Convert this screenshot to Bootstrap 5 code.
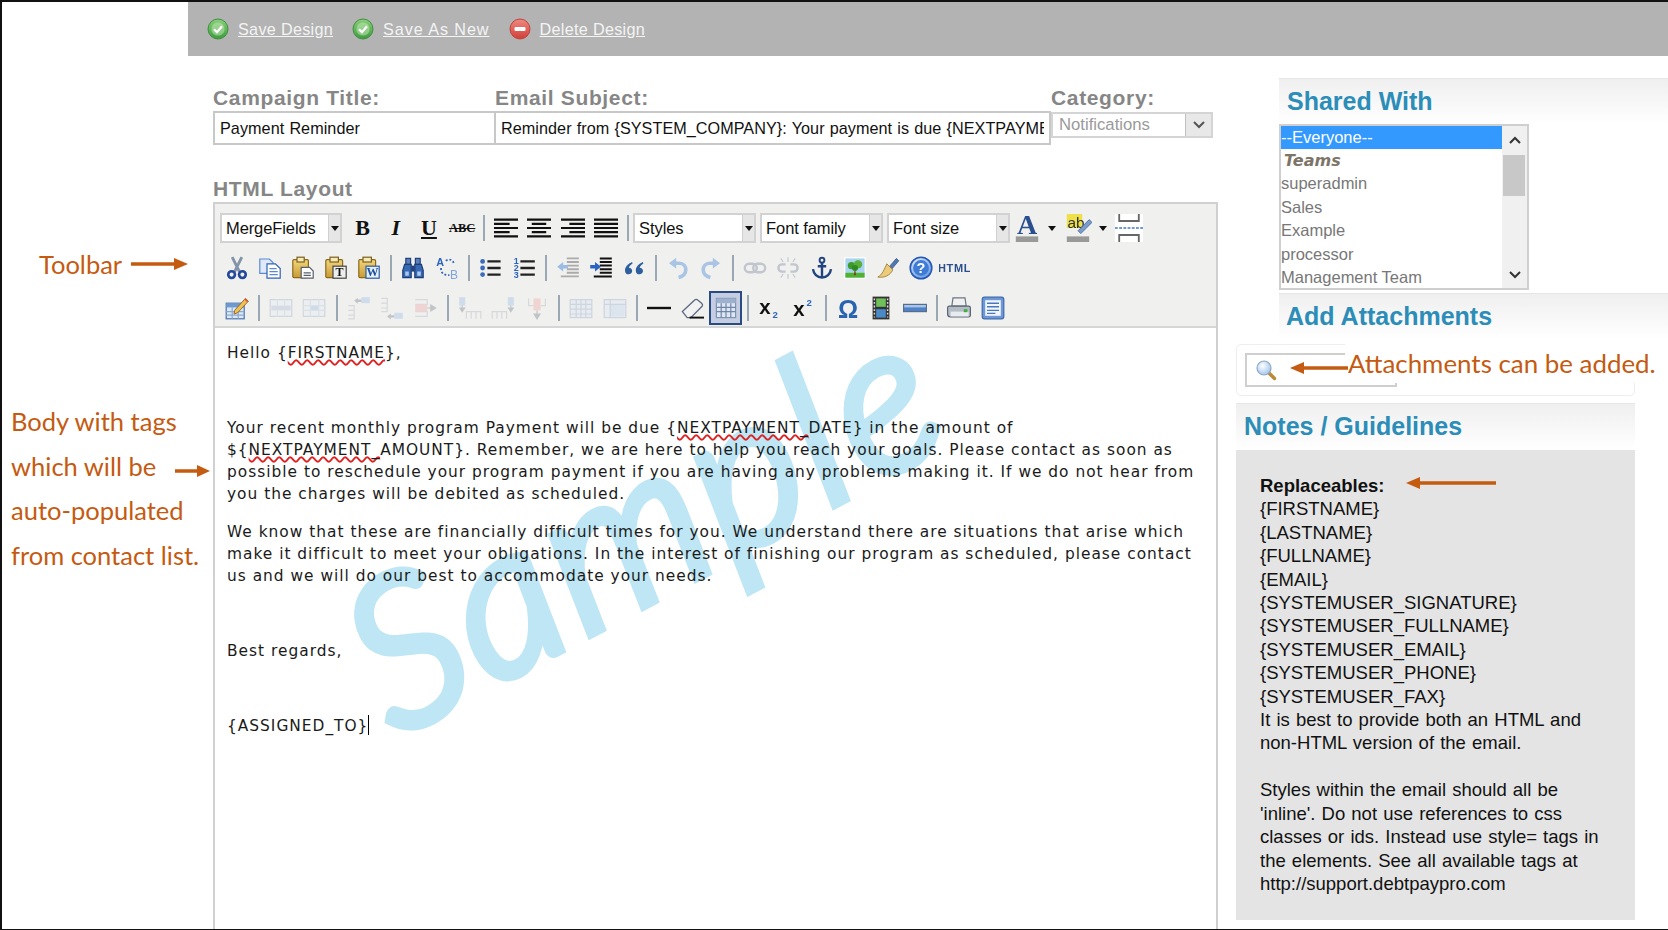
<!DOCTYPE html>
<html lang="en">
<head>
<meta charset="UTF-8">
<title>Campaign Design</title>
<link href="https://cdn.jsdelivr.net/npm/bootstrap@5.3.0/dist/css/bootstrap.min.css" rel="stylesheet">
<style>
html, body { margin: 0; background: #fff; }
body { font-family: "Liberation Sans", Arial, sans-serif; overflow: hidden; }
.page-frame { width: 1668px; height: 930px; border-top: 2px solid #111; border-left: 2px solid #111; border-bottom: 1px solid #111; overflow: hidden; position: relative; }
.action-bar { margin-left: 186px; height: 54px; background: #b3b3b3; padding-left: 19px; font-size: 16.2px; gap: 8px; }
.action-bar a { color: #f4f4f4; margin-right: 11px; margin-left: 1px; letter-spacing: .3px; }
.action-bar a.link-wide { letter-spacing: .92px; }
.note-col { width: 211px; flex: none; position: relative; font-family: Lato, sans-serif; color: #c55a11; font-size: 25.5px; }
.note-tool { margin-top: 193px; height: 30px; padding-left: 37px; }
.note-body { padding: 120px 0 0 9px; line-height: 44.7px; white-space: nowrap; }
.note-arrow { display: block; }
.note-body-line { position: relative; }
.note-body-line svg { position: absolute; left: 163px; top: 20px; }
.main-col { width: 1005px; flex: none; }
.field-row { padding-top: 29px; }
.field-label { color: #868686; font-weight: 700; font-size: 21px; line-height: 26px; letter-spacing: .65px; }
.field-title { width: 282px; flex: none; }
.field-subject { width: 556px; flex: none; }
.field-input { display: block; width: 100%; height: 34px; border: 2px solid #c8c8c8; border-radius: 0; padding: 0 5px; font-size: 16.2px; letter-spacing: .05px; word-spacing: .6px; color: #111; font-family: "Liberation Sans", sans-serif; background: #fff; outline: 0; }
.field-title .field-input { border-right-width: 1px; }
.field-subject .field-input { border-left-width: 1px; }
.cat-select { width: 162px; height: 26px; margin-top: 1px; border: 2px solid #d4d4d4; color: #9a9a9a; font-size: 16.7px; padding-left: 6px; background: #fff; }
.cat-arrow { width: 26px; height: 22px; margin-left: auto; background: #e8e8e8; border-left: 1px solid #c0c0c0; }
.editor-label { color: #868686; font-weight: 700; font-size: 21px; line-height: 26px; letter-spacing: .65px; margin-top: 31px; }
.editor-box { border: 2px solid #d0d0d0; border-bottom: 0; height: 740px; width: 1005px; }
.editor-tools { background: #f0f0ee; height: 124px; padding: 4px 0 0 5px; border-bottom: 2px solid #d6d6d6; }
.tool-row { height: 40px; }
.tool-btn { width: 33.2px; height: 34px; flex: none; }
.tool-btn svg { width: 24px; height: 24px; display: block; flex: none; filter: blur(.3px); }
.tool-btn .tool-big { width: 28px; height: 28px; }
.tool-btn .tool-html { width: 31px; height: 20px; }
.tool-off svg { opacity: .45; }
.tool-on { background: #c4cde2; outline: 2px solid #2a4a82; outline-offset: -2px; }
.tool-sep { width: 10.8px; height: 26px; flex: none; background: linear-gradient(#9aa7b5, #9aa7b5) center / 2px 100% no-repeat; }
.tool-wide .tool-btn { width: 33.4px; }
.tool-wide .tool-sep { width: 11px; }
.tool-mini { width: 18px; }
.drop-box { height: 30px; flex: none; border: 2px solid #d2d2d2; background: #fff; padding-left: 4px; font-size: 16.5px; letter-spacing: -.1px; color: #111; }
.drop-caret { width: 12px; height: 26px; margin-left: auto; background: #e6e6e6; border-left: 1px solid #d0d0d0; }
.tri { width: 0; height: 0; border-left: 4px solid transparent; border-right: 4px solid transparent; border-top: 5px solid #111; }
.tb-letter { font-family: "Liberation Serif", serif; font-size: 22px; font-weight: 700; color: #111; line-height: 1; }
.editor-body { position: relative; padding: 14px 0 0 12px; font-family: "DejaVu Sans", Verdana, sans-serif; font-size: 15.4px; letter-spacing: 1px; line-height: 22px; color: #1a1a1a; overflow: hidden; height: 614px; }
.editor-body p { margin: 0 0 15.5px; position: relative; }
.spell-err { text-decoration: underline wavy #d22; text-decoration-thickness: 1.5px; }
.caret-bar { display: inline-block; width: 1px; height: 20px; background: #000; vertical-align: -4px; }
.water-mark { position: absolute; left: 192px; top: 225px; font-family: Lato, sans-serif; font-style: italic; font-weight: 300; font-size: 205px; letter-spacing: 5px; line-height: 1; color: #bee6f4; -webkit-text-stroke: 11px #bee6f4; paint-order: stroke; transform: rotate(-28deg); transform-origin: left bottom; white-space: nowrap; user-select: none; }
.side-col { flex: 1; min-width: 0; position: relative; margin-left: 18px; }
.soft-head { background: linear-gradient(#efefef, #fff); border-top: 1px solid #e6e6e6; color: #2b8db8; font-weight: 700; font-size: 25px; line-height: 30px; letter-spacing: 0; }
.share-head { margin: 22px 0 0 43px; height: 46px; padding: 7px 0 0 8px; }
.share-list { margin-left: 43px; width: 250px; height: 166px; border: 2px solid #cfcfcf; background: #fff; overflow: hidden; }
.share-items { flex: 1; font-size: 16.5px; color: #777; line-height: 23.4px; }
.share-pick { background: #3399ff; color: #fff; height: 23px; line-height: 23px; }
.share-team { font-family: "DejaVu Sans", sans-serif; font-weight: 700; font-style: italic; font-size: 16px; color: #7d7468; padding-left: 3px; }
.share-bar { width: 25px; background: #f0f0f0; }
.share-thumb { height: 41px; width: 22px; background: #c8c8c8; margin: 2px 0 0 1px; }
.chev { height: 27px; color: #333; }
.chev-down { margin-top: auto; }
.attach-head { margin: 3px 0 0 43px; height: 46px; padding: 7px 0 0 7px; }
.attach-box { margin: 5px 33px 0 0; height: 52px; border: 1px solid #eee; border-radius: 5px; padding: 8px 0 0 8px; position: relative; }
.attach-input { width: 152px; height: 34px; border: 2px solid #cfcfcf; padding-left: 8px; }
.attach-note { position: absolute; left: 108px; top: -2px; height: 40px; padding-left: 3px; background: #fff; font-family: Lato, sans-serif; color: #c55a11; font-size: 25.9px; white-space: nowrap; }
.attach-arrow { position: absolute; left: 53px; top: 16px; z-index: 2; }
.guide-head { margin: 7px 33px 0 0; height: 47px; padding: 7px 0 0 8px; }
.guide-box { margin-right: 33px; height: 470px; background: #e4e4e4; padding: 24px 10px 0 24px; font-size: 18.5px; line-height: 23.4px; word-spacing: 1px; color: #111; position: relative; }
.guide-arrow { position: absolute; left: 170px; top: 26px; }
</style>
</head>
<body>

<svg width="0" height="0" class="position-absolute">
  <defs>
    <linearGradient id="gGreen" x1="0" y1="0" x2="0" y2="1"><stop offset="0" stop-color="#8ad07a"/><stop offset="1" stop-color="#3d9c3d"/></linearGradient>
    <linearGradient id="gRed" x1="0" y1="0" x2="0" y2="1"><stop offset="0" stop-color="#f08a80"/><stop offset="1" stop-color="#cf3f38"/></linearGradient>
    <linearGradient id="gClip" x1="0" y1="0" x2="0" y2="1"><stop offset="0" stop-color="#f3d77c"/><stop offset="1" stop-color="#c99a35"/></linearGradient>
    <radialGradient id="gHelp" cx=".4" cy=".35" r=".7"><stop offset="0" stop-color="#fff"/><stop offset="1" stop-color="#5f94e0"/></radialGradient>
    <radialGradient id="gLens" cx=".4" cy=".35" r=".7"><stop offset="0" stop-color="#fff"/><stop offset="1" stop-color="#9cc4ec"/></radialGradient>
  </defs>
  <symbol id="i-ok" viewBox="0 0 22 22"><circle cx="11" cy="11" r="10" fill="url(#gGreen)" stroke="#3f8f3f"/><circle cx="11" cy="11" r="6.6" fill="#bfe5b5" opacity=".55"/><path d="M7 11.2l3 3 5-6" fill="none" stroke="#fff" stroke-width="2.2"/></symbol>
  <symbol id="i-del" viewBox="0 0 22 22"><circle cx="11" cy="11" r="10" fill="url(#gRed)" stroke="#c0443c"/><rect x="5.500" y="9" width="11" height="4" rx="1" fill="#fff"/></symbol>
  <symbol id="i-cut" viewBox="0 0 20 20"><path d="M6 1l6 12M14 1L8 13" stroke="#8494a8" stroke-width="2.400" fill="none"/><circle cx="5.500" cy="15.500" r="2.800" fill="none" stroke="#24489a" stroke-width="2.200"/><circle cx="14.500" cy="15.500" r="2.800" fill="none" stroke="#24489a" stroke-width="2.200"/></symbol>
  <symbol id="i-copy" viewBox="0 0 20 20"><path d="M1.500 2.500h8l3 3v9h-11z" fill="#dfe9fa" stroke="#5c8ad0"/><path d="M7.500 6.500h7l4 4v8h-11z" fill="#fff" stroke="#2e62b5"/><path d="M9.500 10.500h6M9.500 13h7M9.500 15.500h7" stroke="#5c8ad0"/></symbol>
  <symbol id="i-paste" viewBox="0 0 20 20"><rect x="1.500" y="3" width="13" height="15" rx="1" fill="url(#gClip)" stroke="#8a6a1a"/><rect x="5" y="1" width="6" height="4" fill="#f6e9b4" stroke="#7a6020"/><path d="M8.500 9.500h7l3 3v6h-10z" fill="#fff" stroke="#56606e"/><path d="M10.500 14h6M10.500 16.200h6" stroke="#56606e"/></symbol>
  <symbol id="i-ptext" viewBox="0 0 20 20"><rect x="1.500" y="3" width="14" height="15" rx="1" fill="url(#gClip)" stroke="#8a6a1a"/><rect x="5" y="1" width="7" height="4" fill="#f6e9b4" stroke="#7a6020"/><rect x="7.500" y="8.500" width="11" height="10" fill="#eee" stroke="#444"/><text x="13" y="17" text-anchor="middle" font-family="Liberation Serif, serif" font-weight="700" font-size="10" fill="#111">T</text></symbol>
  <symbol id="i-pword" viewBox="0 0 20 20"><rect x="1.500" y="3" width="14" height="15" rx="1" fill="url(#gClip)" stroke="#8a6a1a"/><rect x="5" y="1" width="7" height="4" fill="#f6e9b4" stroke="#7a6020"/><rect x="7.500" y="8.500" width="11" height="10" fill="#e6effc" stroke="#2a5ca8"/><text x="13" y="17" text-anchor="middle" font-family="Liberation Serif, serif" font-weight="700" font-size="10" fill="#1c4f9e">W</text></symbol>
  <symbol id="i-find" viewBox="0 0 20 20"><path d="M4 2h4v5H4zM12 2h4v5h-4z" fill="#5c7fb8" stroke="#23437e"/><path d="M3 7h5.500v11H1.500v-6zM11.500 7H17l1.500 5v6h-7z" fill="#3768b4" stroke="#1e3c74"/><rect x="8.500" y="8" width="3" height="5" fill="#23437e"/><path d="M3.500 13h3v3.500h-3zM13.500 13h3v3.500h-3z" fill="#a9c8ee"/></symbol>
  <symbol id="i-repl" viewBox="0 0 20 20"><text x="1" y="8" font-family="Liberation Sans, sans-serif" font-size="9" fill="#2a64c0" font-weight="700">A</text><text x="12.500" y="19" font-family="Liberation Sans, sans-serif" font-size="10" fill="#7fa6dc">B</text><path d="M5 10c0 4 2 6 7 6M9 4c3-2 6-1 7 3" fill="none" stroke="#2a64c0" stroke-width="1.500" stroke-dasharray="1.600 1.600"/></symbol>
  <symbol id="i-bul" viewBox="0 0 20 20"><path d="M7 4.500h11M7 10h11M7 15.500h11" stroke="#222" stroke-width="2"/><circle cx="3" cy="4.500" r="2" fill="#3c6cb8"/><circle cx="3" cy="10" r="2" fill="#3c6cb8"/><circle cx="3" cy="15.500" r="2" fill="#3c6cb8"/></symbol>
  <symbol id="i-num" viewBox="0 0 20 20"><path d="M7 4.500h12M7 10h12M7 15.500h12" stroke="#222" stroke-width="2"/><g font-family="Liberation Sans, sans-serif" font-weight="700" font-size="7.500" fill="#2a64c0"><text x="1.500" y="6.500">1</text><text x="1.500" y="12.500">2</text><text x="1.500" y="18.500">3</text></g></symbol>
  <symbol id="i-out" viewBox="0 0 20 20"><path d="M9 2h10M9 5h10M9 8h10M9 11h10M9 14h10M4 17h15" stroke="#aaa" stroke-width="1.600"/><path d="M1 9l5-4v2.500h4v3H6V13z" fill="#9bbce4"/></symbol>
  <symbol id="i-ind" viewBox="0 0 20 20"><path d="M9 2h10M9 5h10M9 8h10M9 11h10M9 14h10M4 17h15" stroke="#111" stroke-width="1.700"/><path d="M10 9L5 5v2.500H1v3h4V13z" fill="#2a64c0"/></symbol>
  <symbol id="i-quote" viewBox="0 0 20 20"><path d="M8.500 5C5 6.500 2.500 9 2.500 12c0 2 1.300 3.300 3 3.300s3-1.300 3-2.800-1.200-2.700-2.800-2.700c.5-1.200 1.500-2.500 3-3.300zM17.500 5C14 6.500 11.500 9 11.500 12c0 2 1.300 3.300 3 3.300s3-1.300 3-2.800-1.200-2.700-2.800-2.700c.5-1.200 1.500-2.500 3-3.300z" fill="#2d5e9e"/></symbol>
  <symbol id="i-undo" viewBox="0 0 20 20"><path d="M7 6h4c3.500 0 5.500 2.500 5.500 5.500S14 17 10.500 18" fill="none" stroke="#a9c4e4" stroke-width="3"/><path d="M2.500 6l6-4.500v9z" fill="#a9c4e4"/></symbol>
  <symbol id="i-redo" viewBox="0 0 20 20"><path d="M13 6H9C5.500 6 3.500 8.500 3.500 11.500S6 17 9.500 18" fill="none" stroke="#a9c4e4" stroke-width="3"/><path d="M17.500 6l-6-4.500v9z" fill="#a9c4e4"/></symbol>
  <symbol id="i-link" viewBox="0 0 20 20"><rect x="1.500" y="6.500" width="10" height="7" rx="3.500" fill="none" stroke="#c0c5ce" stroke-width="2"/><rect x="8.500" y="6.500" width="10" height="7" rx="3.500" fill="none" stroke="#c0c5ce" stroke-width="2"/></symbol>
  <symbol id="i-unlink" viewBox="0 0 20 20"><path d="M8 7H5a3 3 0 0 0 0 6h3M12 7h3a3 3 0 0 1 0 6h-3" fill="none" stroke="#c0c5ce" stroke-width="2"/><path d="M10 1v4M10 15v4M4 2l2 3M16 2l-2 3M4 18l2-3M16 18l-2-3" stroke="#c4c8d0"/></symbol>
  <symbol id="i-anchor" viewBox="0 0 20 20"><circle cx="10" cy="3.500" r="2" fill="none" stroke="#23437e" stroke-width="1.600"/><path d="M10 5.500V18M6.500 8.500h7M2.500 11c.5 4 3.500 7 7.500 7s7-3 7.500-7" fill="none" stroke="#23437e" stroke-width="2"/></symbol>
  <symbol id="i-img" viewBox="0 0 20 20"><rect x="1" y="1" width="18" height="18" fill="#fff"/><rect x="2" y="2" width="16" height="16" fill="#a9d3f0"/><rect x="2" y="14" width="16" height="4" fill="#4fb32c"/><path d="M9 16l1-6 1 6z" fill="#7a4a1c"/><circle cx="7" cy="8" r="3" fill="#3d9a2c"/><circle cx="12.500" cy="7" r="3.500" fill="#56b03a"/><circle cx="10" cy="10" r="2.500" fill="#2f8a24"/></symbol>
  <symbol id="i-broom" viewBox="0 0 20 20"><path d="M11 9l6-7 2 2-6 7z" fill="#5478b0" stroke="#2d4a7e" stroke-width=".6"/><path d="M9 6.500l5 5C12 16 7 18.500 1.500 17.500 5 16 7 11 9 6.500z" fill="#eccb7c" stroke="#9a7b30" stroke-width=".7"/></symbol>
  <symbol id="i-help" viewBox="0 0 20 20"><circle cx="10" cy="10" r="9" fill="url(#gHelp)" stroke="#2458b4" stroke-width="1.300"/><circle cx="10" cy="10" r="6.600" fill="#3f7cd6"/><text x="10" y="14.500" text-anchor="middle" font-family="Liberation Sans, sans-serif" font-weight="700" font-size="12" fill="#fff">?</text></symbol>
  <symbol id="i-tedit" viewBox="0 0 20 20"><rect x="1" y="6" width="15" height="13" fill="#dde8f6" stroke="#4a74ae"/><rect x="1" y="6" width="15" height="3.500" fill="#6f9ad0"/><path d="M1 13h15M1 16h15M6 9v10M11 9v10" stroke="#8aaad2"/><path d="M8 12l9-10 2.500 2.300L10.500 14l-3 1z" fill="#f0c050" stroke="#8a5a20" stroke-width=".7"/><path d="M16 3l1-1 2.500 2.300-1 1z" fill="#d85a3a"/></symbol>
  <symbol id="i-tr" viewBox="0 0 20 20"><rect x="1" y="3" width="18" height="14" fill="#e8eef6" stroke="#aab8cc"/><rect x="2" y="8" width="16" height="4" fill="#b8c4d6"/><path d="M7 3v5M13 3v5M7 12v5M13 12v5" stroke="#c4cfdd"/></symbol>
  <symbol id="i-td" viewBox="0 0 20 20"><rect x="1" y="3" width="18" height="14" fill="#e8eef6" stroke="#aab8cc"/><rect x="7" y="8" width="7" height="4" fill="#9fc0ea"/><path d="M7 3v14M14 3v14M1 8h18M1 12h18" stroke="#c4cfdd"/></symbol>
  <symbol id="i-rbef" viewBox="0 0 20 20"><path d="M1 8h5v4H1M1 12h5v4H1M1 16h5v3H1" fill="none" stroke="#b9bcc2"/><rect x="12" y="1" width="7" height="5" fill="#a9c6e8"/><path d="M6 4l3-2.500V3h3v2H9v1.500z" fill="#8a9097"/></symbol>
  <symbol id="i-raft" viewBox="0 0 20 20"><path d="M1 2h5v4H1M1 6h5v4H1M1 10h5v3H1" fill="none" stroke="#b9bcc2"/><rect x="12" y="14" width="7" height="5" fill="#a9c6e8"/><path d="M6 17l3-2.500V16h3v2H9v1.500z" fill="#8a9097"/></symbol>
  <symbol id="i-rdel" viewBox="0 0 20 20"><path d="M1 3h10v4H1M1 13h10v4H1" fill="none" stroke="#b9bcc2"/><rect x="1" y="7" width="10" height="6" fill="#f0b4b4"/><path d="M11 10h5M14 7.500l4 2.500-4 2.500z" fill="#8a9097" stroke="#8a9097"/></symbol>
  <symbol id="i-cbef" viewBox="0 0 20 20"><rect x="1" y="1" width="5" height="7" fill="#a9c6e8"/><path d="M3.500 8v3M1.500 10l2 3 2-3z" fill="#8a9097" stroke="#8a9097"/><path d="M7 19v-6h4v6M11 19v-6h4v6M15 19v-6h4v6" fill="none" stroke="#b9bcc2"/></symbol>
  <symbol id="i-caft" viewBox="0 0 20 20"><rect x="14" y="1" width="5" height="7" fill="#a9c6e8"/><path d="M16.500 8v3M14.500 10l2 3 2-3z" fill="#8a9097" stroke="#8a9097"/><path d="M1 19v-6h4v6M5 19v-6h4v6M9 19v-6h4v6" fill="none" stroke="#b9bcc2"/></symbol>
  <symbol id="i-cdel" viewBox="0 0 20 20"><path d="M3 2v6h4M17 2v6h-4" fill="none" stroke="#b9bcc2"/><rect x="7" y="2" width="6" height="10" fill="#f0b4b4"/><path d="M10 12v4M7.500 15l2.500 4 2.500-4z" fill="#8a9097" stroke="#8a9097"/></symbol>
  <symbol id="i-tbl" viewBox="0 0 20 20"><rect x="1" y="3" width="18" height="15" fill="#dfe8f4" stroke="#a3b5cc"/><path d="M1 7h18M1 11h18M1 15h18M6 3v15M10 3v15M14 3v15" stroke="#a3b5cc"/></symbol>
  <symbol id="i-tbl2" viewBox="0 0 20 20"><rect x="1" y="3" width="18" height="15" fill="#e0e9f6" stroke="#a3b5cc"/><rect x="6" y="7" width="12" height="10" fill="#c6d8f0"/><path d="M1 7h18M6 3v15" stroke="#a3b5cc"/></symbol>
  <symbol id="i-hr" viewBox="0 0 20 20"><path d="M0 10h20" stroke="#111" stroke-width="2"/></symbol>
  <symbol id="i-erase" viewBox="0 0 20 20"><path d="M2 13L12 3.500c1-1 2-1 3 0l3 2.500c1 1 1 2 0 3L9 18H6z" fill="#f2f2f2" stroke="#5a6a80" stroke-width="1.100"/><path d="M8 18h12" stroke="#111" stroke-width="1.600"/></symbol>
  <symbol id="i-cal" viewBox="0 0 20 20"><rect x="2" y="2" width="16" height="16" fill="#dfe6f2" stroke="#7f94b4"/><rect x="2" y="2" width="16" height="4" fill="#9db0cc"/><path d="M2 9.500h16M2 13h16M6 6v12M10 6v12M14 6v12" stroke="#6f86a8"/></symbol>
  <symbol id="i-film" viewBox="0 0 20 20"><rect x="3" y="0.500" width="14" height="19" fill="#333"/><rect x="6" y="2" width="8" height="7" fill="#6fc05a"/><rect x="6" y="11" width="8" height="7" fill="#4a8ac8"/><path d="M4.500 2v16M15.500 2v16" stroke="#ddd" stroke-width="1.200" stroke-dasharray="1.500 1.500"/></symbol>
  <symbol id="i-bar" viewBox="0 0 20 20"><rect x="0.500" y="7" width="19" height="6" fill="#4f82c8" stroke="#5a6d88"/><rect x="1" y="7.500" width="18" height="2" fill="#a8c6ec"/></symbol>
  <symbol id="i-print" viewBox="0 0 20 20"><path d="M5 1.500h10l1 7H4z" fill="#f0f0f0" stroke="#6a7684"/><path d="M2 8.500h16c1 0 1.500.5 1.500 1.500v6c0 1-.5 1.500-1.500 1.500H3c-1.500 0-2.500-1-2.500-2.500V10c0-1 .5-1.500 1.500-1.500z" fill="#b4bcc6" stroke="#596572"/><rect x="3" y="13" width="15" height="4" fill="#e8ecf0"/><rect x="14" y="11" width="3" height="2.500" fill="#3fb03a"/></symbol>
  <symbol id="i-prev" viewBox="0 0 20 20"><rect x="1" y="1" width="18" height="18" rx="2" fill="#6d98d8" stroke="#3d68ac"/><rect x="3.500" y="3.500" width="13" height="13" fill="#f2f6fc"/><path d="M5 6h10M5 9h10M5 12h10M5 14.500h7" stroke="#4a78bc" stroke-width="1.200"/></symbol>
  <symbol id="i-lens" viewBox="0 0 22 22"><path d="M13 13l6.500 6.500" stroke="#b98a3c" stroke-width="3.400" stroke-linecap="round"/><circle cx="9" cy="9" r="7" fill="url(#gLens)" stroke="#8fa9c4" stroke-width="1.200"/></symbol>
</svg>

<div class="page-frame">
  <div class="action-bar d-flex align-items-center">
    <svg width="22" height="22"><use href="#i-ok"/></svg><a href="#">Save Design</a>
    <svg width="22" height="22"><use href="#i-ok"/></svg><a href="#" class="link-wide">Save As New</a>
    <svg width="22" height="22"><use href="#i-del"/></svg><a href="#">Delete Design</a>
  </div>

  <div class="d-flex">
    <div class="note-col">
      <div class="note-tool d-flex align-items-center gap-2 text-nowrap">Toolbar
        <svg class="note-arrow" width="58" height="14" viewBox="0 0 58 14"><path d="M1 7h44" stroke="#c55a11" stroke-width="3.500"/><path d="M44 1l14 6-14 6z" fill="#c55a11"/></svg>
      </div>
      <div class="note-body">
        <div>Body with tags</div>
        <div class="note-body-line">which will be <svg width="36" height="14" viewBox="0 0 36 14"><path d="M1 7h22" stroke="#c55a11" stroke-width="3.500"/><path d="M23 1l13 6-13 6z" fill="#c55a11"/></svg></div>
        <div>auto-populated</div>
        <div>from contact list.</div>
      </div>
    </div>

    <div class="main-col">
      <div class="field-row d-flex">
        <div class="field-title"><div class="field-label">Campaign Title:</div><input class="field-input" value="Payment Reminder"></div>
        <div class="field-subject"><div class="field-label">Email Subject:</div><input class="field-input" value="Reminder from {SYSTEM_COMPANY}: Your payment is due {NEXTPAYMENT_DATE}"></div>
        <div><div class="field-label">Category:</div>
          <div class="cat-select d-flex align-items-center">Notifications
            <div class="cat-arrow d-flex align-items-center justify-content-center"><svg width="14" height="10" viewBox="0 0 14 10"><path d="M2 2l5 5 5-5" fill="none" stroke="#555" stroke-width="2"/></svg></div>
          </div>
        </div>
      </div>

      <div class="editor-label">HTML Layout</div>
      <div class="editor-box">
        <div class="editor-tools">
          <div class="tool-row d-flex align-items-center">
            <div class="drop-box d-flex align-items-center" style="width:122px">MergeFields<span class="drop-caret d-flex align-items-center justify-content-center"><span class="tri"></span></span></div>
            <div class="tool-btn d-flex align-items-center justify-content-center ms-1 tb-letter">B</div>
            <div class="tool-btn d-flex align-items-center justify-content-center tb-letter fst-italic">I</div>
            <div class="tool-btn d-flex align-items-center justify-content-center tb-letter text-decoration-underline">U</div>
            <div class="tool-btn d-flex align-items-center justify-content-center tb-letter"><s style="font-size:12.5px">ABC</s></div>
            <div class="tool-sep"></div>
            <div class="tool-btn d-flex align-items-center justify-content-center"><svg viewBox="0 0 20 20"><path d="M0 3h20M0 6.500h13M0 10h20M0 13.500h13M0 17h20" stroke="#111" stroke-width="1.800"/></svg></div>
            <div class="tool-btn d-flex align-items-center justify-content-center"><svg viewBox="0 0 20 20"><path d="M0 3h20M4 6.500h12M0 10h20M4 13.500h12M0 17h20" stroke="#111" stroke-width="1.800"/></svg></div>
            <div class="tool-btn d-flex align-items-center justify-content-center"><svg viewBox="0 0 20 20"><path d="M0 3h20M7 6.500h13M0 10h20M7 13.500h13M0 17h20" stroke="#111" stroke-width="1.800"/></svg></div>
            <div class="tool-btn d-flex align-items-center justify-content-center"><svg viewBox="0 0 20 20"><path d="M0 3h20M0 6.500h20M0 10h20M0 13.500h20M0 17h20" stroke="#111" stroke-width="1.800"/></svg></div>
            <div class="tool-sep"></div>
            <div class="drop-box d-flex align-items-center" style="width:123px">Styles<span class="drop-caret d-flex align-items-center justify-content-center"><span class="tri"></span></span></div>
            <div class="drop-box d-flex align-items-center ms-1" style="width:123px">Font family<span class="drop-caret d-flex align-items-center justify-content-center"><span class="tri"></span></span></div>
            <div class="drop-box d-flex align-items-center ms-1" style="width:123px">Font size<span class="drop-caret d-flex align-items-center justify-content-center"><span class="tri"></span></span></div>
            <div class="tool-btn d-flex align-items-center justify-content-center"><svg class="tool-big" viewBox="0 0 20 20"><text x="10" y="14.500" text-anchor="middle" font-family="Liberation Serif, serif" font-weight="700" font-size="20" fill="#2a4f8f">A</text><rect x="2" y="16" width="16" height="4" fill="#999"/></svg></div>
            <div class="tool-mini d-flex justify-content-center"><span class="tri"></span></div>
            <div class="tool-btn d-flex align-items-center justify-content-center"><svg class="tool-big" viewBox="0 0 20 20"><rect x="2" y="0" width="11" height="10" fill="#eee04a"/><text x="2.500" y="10" font-family="Liberation Sans, sans-serif" font-size="11" fill="#333">ab</text><path d="M10 12l8-8 2 2-8 8z" fill="#7a9ccc" stroke="#4a6a9a" stroke-width=".6"/><rect x="2" y="16" width="16" height="4" fill="#999"/></svg></div>
            <div class="tool-mini d-flex justify-content-center"><span class="tri"></span></div>
            <div class="tool-btn d-flex align-items-center justify-content-center"><svg class="tool-big bg-white" viewBox="0 0 20 20"><path d="M3 0v5h14V0M3 20v-5h14v5" fill="none" stroke="#666" stroke-width="1.300"/><path d="M0 10h20" stroke="#6f9bd0" stroke-width="1.400" stroke-dasharray="2 1"/></svg></div>
          </div>

          <div class="tool-row d-flex align-items-center">
            <div class="tool-btn d-flex align-items-center justify-content-center"><svg><use href="#i-cut"/></svg></div>
            <div class="tool-btn d-flex align-items-center justify-content-center"><svg><use href="#i-copy"/></svg></div>
            <div class="tool-btn d-flex align-items-center justify-content-center"><svg><use href="#i-paste"/></svg></div>
            <div class="tool-btn d-flex align-items-center justify-content-center"><svg><use href="#i-ptext"/></svg></div>
            <div class="tool-btn d-flex align-items-center justify-content-center"><svg><use href="#i-pword"/></svg></div>
            <div class="tool-sep"></div>
            <div class="tool-btn d-flex align-items-center justify-content-center"><svg><use href="#i-find"/></svg></div>
            <div class="tool-btn d-flex align-items-center justify-content-center"><svg><use href="#i-repl"/></svg></div>
            <div class="tool-sep"></div>
            <div class="tool-btn d-flex align-items-center justify-content-center"><svg><use href="#i-bul"/></svg></div>
            <div class="tool-btn d-flex align-items-center justify-content-center"><svg><use href="#i-num"/></svg></div>
            <div class="tool-sep"></div>
            <div class="tool-btn d-flex align-items-center justify-content-center"><svg><use href="#i-out"/></svg></div>
            <div class="tool-btn d-flex align-items-center justify-content-center"><svg><use href="#i-ind"/></svg></div>
            <div class="tool-btn d-flex align-items-center justify-content-center"><svg><use href="#i-quote"/></svg></div>
            <div class="tool-sep"></div>
            <div class="tool-btn d-flex align-items-center justify-content-center"><svg><use href="#i-undo"/></svg></div>
            <div class="tool-btn d-flex align-items-center justify-content-center"><svg><use href="#i-redo"/></svg></div>
            <div class="tool-sep"></div>
            <div class="tool-btn d-flex align-items-center justify-content-center"><svg><use href="#i-link"/></svg></div>
            <div class="tool-btn d-flex align-items-center justify-content-center"><svg><use href="#i-unlink"/></svg></div>
            <div class="tool-btn d-flex align-items-center justify-content-center"><svg><use href="#i-anchor"/></svg></div>
            <div class="tool-btn d-flex align-items-center justify-content-center"><svg><use href="#i-img"/></svg></div>
            <div class="tool-btn d-flex align-items-center justify-content-center"><svg><use href="#i-broom"/></svg></div>
            <div class="tool-btn d-flex align-items-center justify-content-center"><svg><use href="#i-help"/></svg></div>
            <div class="tool-btn d-flex align-items-center justify-content-center"><svg class="tool-html" viewBox="0 0 30 20"><text x="15" y="14" text-anchor="middle" font-family="Liberation Sans, sans-serif" font-weight="700" font-size="11" letter-spacing=".6" fill="#2a4f8f">HTML</text></svg></div>
          </div>

          <div class="tool-row tool-wide d-flex align-items-center">
            <div class="tool-btn d-flex align-items-center justify-content-center"><svg><use href="#i-tedit"/></svg></div>
            <div class="tool-sep"></div>
            <div class="tool-btn d-flex align-items-center justify-content-center tool-off"><svg><use href="#i-tr"/></svg></div>
            <div class="tool-btn d-flex align-items-center justify-content-center tool-off"><svg><use href="#i-td"/></svg></div>
            <div class="tool-sep"></div>
            <div class="tool-btn d-flex align-items-center justify-content-center tool-off"><svg><use href="#i-rbef"/></svg></div>
            <div class="tool-btn d-flex align-items-center justify-content-center tool-off"><svg><use href="#i-raft"/></svg></div>
            <div class="tool-btn d-flex align-items-center justify-content-center tool-off"><svg><use href="#i-rdel"/></svg></div>
            <div class="tool-sep"></div>
            <div class="tool-btn d-flex align-items-center justify-content-center tool-off"><svg><use href="#i-cbef"/></svg></div>
            <div class="tool-btn d-flex align-items-center justify-content-center tool-off"><svg><use href="#i-caft"/></svg></div>
            <div class="tool-btn d-flex align-items-center justify-content-center tool-off"><svg><use href="#i-cdel"/></svg></div>
            <div class="tool-sep"></div>
            <div class="tool-btn d-flex align-items-center justify-content-center tool-off"><svg><use href="#i-tbl"/></svg></div>
            <div class="tool-btn d-flex align-items-center justify-content-center tool-off"><svg><use href="#i-tbl2"/></svg></div>
            <div class="tool-sep"></div>
            <div class="tool-btn d-flex align-items-center justify-content-center"><svg><use href="#i-hr"/></svg></div>
            <div class="tool-btn d-flex align-items-center justify-content-center"><svg><use href="#i-erase"/></svg></div>
            <div class="tool-btn d-flex align-items-center justify-content-center tool-on"><svg><use href="#i-cal"/></svg></div>
            <div class="tool-sep"></div>
            <div class="tool-btn d-flex align-items-center justify-content-center"><svg viewBox="0 0 20 20"><text x="1" y="15" font-family="Liberation Sans, sans-serif" font-weight="700" font-size="17" fill="#111">x</text><text x="12" y="18" font-family="Liberation Sans, sans-serif" font-weight="700" font-size="8" fill="#2a64c0">2</text></svg></div>
            <div class="tool-btn d-flex align-items-center justify-content-center"><svg viewBox="0 0 20 20"><text x="1" y="17" font-family="Liberation Sans, sans-serif" font-weight="700" font-size="17" fill="#111">x</text><text x="12" y="8" font-family="Liberation Sans, sans-serif" font-weight="700" font-size="8" fill="#2a64c0">2</text></svg></div>
            <div class="tool-sep"></div>
            <div class="tool-btn d-flex align-items-center justify-content-center"><svg viewBox="0 0 20 20"><text x="10" y="18" text-anchor="middle" font-family="Liberation Sans, sans-serif" font-weight="700" font-size="21" fill="#2a64b0">Ω</text></svg></div>
            <div class="tool-btn d-flex align-items-center justify-content-center"><svg><use href="#i-film"/></svg></div>
            <div class="tool-btn d-flex align-items-center justify-content-center"><svg><use href="#i-bar"/></svg></div>
            <div class="tool-sep"></div>
            <div class="tool-btn d-flex align-items-center justify-content-center"><svg><use href="#i-print"/></svg></div>
            <div class="tool-btn d-flex align-items-center justify-content-center"><svg><use href="#i-prev"/></svg></div>
          </div>
        </div>

        <div class="editor-body">
          <div class="water-mark">Sample</div>
          <p>Hello {<span class="spell-err">FIRSTNAME</span>},</p>
          <p>&nbsp;</p>
          <p>Your recent monthly program Payment will be due {<span class="spell-err">NEXTPAYMENT_</span>DATE} in the amount of<br>${<span class="spell-err">NEXTPAYMENT_</span>AMOUNT}. Remember, we are here to help you reach your goals. Please contact as soon as<br>possible to reschedule your program payment if you are having any problems making it. If we do not hear from<br>you the charges will be debited as scheduled.</p>
          <p>We know that these are financially difficult times for you. We understand there are situations that arise which<br>make it difficult to meet your obligations. In the interest of finishing our program as scheduled, please contact<br>us and we will do our best to accommodate your needs.</p>
          <p>&nbsp;</p>
          <p>Best regards,</p>
          <p>&nbsp;</p>
          <p>{ASSIGNED_TO}<span class="caret-bar"></span></p>
        </div>
      </div>
    </div>

    <div class="side-col">
      <div class="soft-head share-head">Shared With</div>
      <div class="share-list d-flex">
        <div class="share-items">
          <div class="share-pick">--Everyone--</div>
          <div class="share-team">Teams</div>
          <div>superadmin</div>
          <div>Sales</div>
          <div>Example</div>
          <div>processor</div>
          <div>Management Team</div>
        </div>
        <div class="share-bar d-flex flex-column">
          <div class="chev d-flex align-items-center justify-content-center"><svg width="14" height="10" viewBox="0 0 14 10"><path d="M2 8l5-5 5 5" fill="none" stroke="#333" stroke-width="2"/></svg></div>
          <div class="share-thumb"></div>
          <div class="chev chev-down d-flex align-items-center justify-content-center"><svg width="14" height="10" viewBox="0 0 14 10"><path d="M2 2l5 5 5-5" fill="none" stroke="#333" stroke-width="2"/></svg></div>
        </div>
      </div>
      <div class="soft-head attach-head">Add Attachments</div>
      <div class="attach-box">
        <div class="attach-input d-flex align-items-center"><svg width="22" height="22"><use href="#i-lens"/></svg></div>
        <svg class="attach-arrow" width="58" height="14" viewBox="0 0 58 14"><path d="M13 7h45" stroke="#c55a11" stroke-width="3.500"/><path d="M14 1L0 7l14 6z" fill="#c55a11"/></svg>
        <div class="attach-note d-flex align-items-center">Attachments can be added.</div>
      </div>
      <div class="soft-head guide-head">Notes / Guidelines</div>
      <div class="guide-box">
        <svg class="guide-arrow" width="90" height="14" viewBox="0 0 90 14"><path d="M13 7h77" stroke="#c55a11" stroke-width="3.500"/><path d="M14 1L0 7l14 6z" fill="#c55a11"/></svg>
        <b>Replaceables:</b><br>
        {FIRSTNAME}<br>{LASTNAME}<br>{FULLNAME}<br>{EMAIL}<br>{SYSTEMUSER_SIGNATURE}<br>{SYSTEMUSER_FULLNAME}<br>{SYSTEMUSER_EMAIL}<br>{SYSTEMUSER_PHONE}<br>{SYSTEMUSER_FAX}<br>
        It is best to provide both an HTML and<br>non-HTML version of the email.<br><br>
        Styles within the email should all be<br>'inline'. Do not use references to css<br>classes or ids. Instead use style= tags in<br>the elements. See all available tags at<br>http://support.debtpaypro.com
      </div>
    </div>
  </div>
</div>

<script src="https://cdn.jsdelivr.net/npm/bootstrap@5.3.0/dist/js/bootstrap.bundle.min.js"></script>
</body>
</html>
